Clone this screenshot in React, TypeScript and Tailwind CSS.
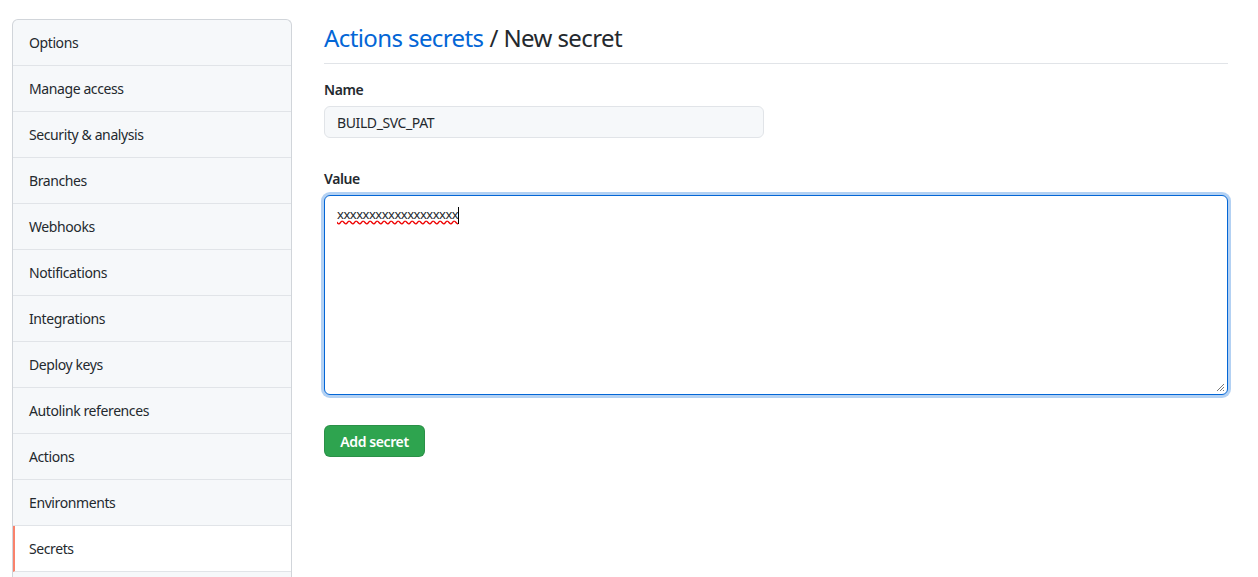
import React from "react";

const items = [
  "Options",
  "Manage access",
  "Security & analysis",
  "Branches",
  "Webhooks",
  "Notifications",
  "Integrations",
  "Deploy keys",
  "Autolink references",
  "Actions",
  "Environments",
  "Secrets",
];

export default function App() {
  return (
    <div
      className="h-[577px] overflow-hidden bg-white text-[#24292e] text-[14px] tracking-[-0.4px]"
      style={{ fontFamily: '"Segoe UI", "Noto Sans", "Liberation Sans", sans-serif' }}
    >
      <div className="flex pt-[19px] pl-[12px] pr-[30px]">
        <nav className="w-[280px] shrink-0 rounded-t-[6px] border border-[#d1d5da] border-b-0 bg-[#f6f8fa] overflow-hidden">
          {items.map((it) => {
            const active = it === "Secrets";
            return (
              <div
                key={it}
                className={
                  active
                    ? "h-[46px] flex items-center border-b border-[#e1e4e8] bg-white border-l-2 border-l-[#f9826c] pl-[14px]"
                    : "h-[46px] flex items-center border-b border-[#e1e4e8] pl-[16px]"
                }
              >
                {it}
              </div>
            );
          })}
          <div className="h-[46px]" />
        </nav>
        <main className="flex-1 ml-[32px]">
          <div className="flex items-center h-[45px] pb-[6px] border-b border-[#e1e4e8] text-[24px] leading-none tracking-[-0.6px]">
            <span className="text-[#0366d6]">Actions secrets</span>
            <span className="ml-[6px]">/ New secret</span>
          </div>
          <div className="mt-[16px] font-semibold leading-[20px]">Name</div>
          <div className="mt-[6px] w-[440px] h-[32px] rounded-[6px] border border-[#e1e4e8] bg-[#f6f8fa] flex items-center px-[12px]">
            BUILD_SVC_PAT
          </div>
          <div className="mt-[31px] font-semibold leading-[20px]">Value</div>
          <div className="mt-[6px] h-[200px] rounded-[6px] border border-[#0366d6] shadow-[0_0_0_3px_rgba(3,102,214,0.3)] bg-white px-[12px] pt-[8px] relative leading-[20px]">
            <span className="underline decoration-wavy decoration-[#e00] text-[13px] tracking-[-0.5px]">
              xxxxxxxxxxxxxxxxxxx
            </span>
            <span className="inline-block w-px h-[17px] bg-black align-middle" />
            <svg className="absolute right-[2px] bottom-[2px]" width="9" height="9" viewBox="0 0 9 9">
              <path d="M8 1 L1 8 M8 4 L4 8 M8 7 L7 8" stroke="#777" strokeWidth="1" />
            </svg>
          </div>
          <button className="mt-[30px] h-[32px] w-[101px] rounded-[6px] bg-[#2ea44f] border border-[rgba(27,31,35,0.15)] text-white font-semibold text-[14px]">
            Add secret
          </button>
        </main>
      </div>
    </div>
  );
}
